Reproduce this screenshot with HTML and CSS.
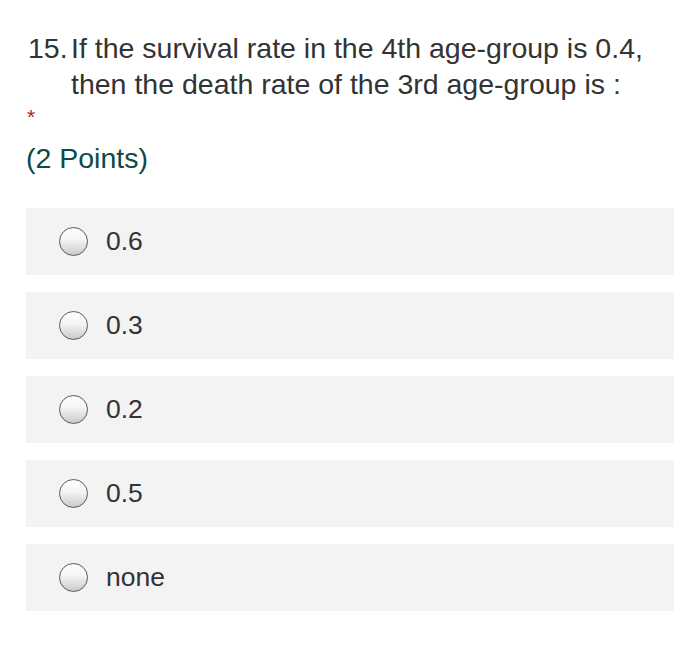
FILE: index.html
```html
<!DOCTYPE html>
<html>
<head>
<meta charset="utf-8">
<link rel="stylesheet" href="styles.css">
</head>
<body>
<div class="question">
  <div class="title">
    <span class="num">15.</span>
    <span class="text">If the survival rate in the 4th age-group is 0.4, then the death rate of the 3rd age-group is :</span>
  </div>
  <div class="required">*</div>
  <div class="points">(2 Points)</div>
  <div class="options">
    <div class="option"><span class="radio"></span><span class="label">0.6</span></div>
    <div class="option"><span class="radio"></span><span class="label">0.3</span></div>
    <div class="option"><span class="radio"></span><span class="label">0.2</span></div>
    <div class="option"><span class="radio"></span><span class="label">0.5</span></div>
    <div class="option"><span class="radio"></span><span class="label">none</span></div>
  </div>
</div>
</body>
</html>
```
FILE: styles.css
```css
html, body {
  margin: 0;
  padding: 0;
  background: #ffffff;
}
body {
  font-family: "Liberation Sans", Arial, sans-serif;
  color: #333333;
}
.question {
  padding: 30px 26px 0 26px;
}
.title {
  display: flex;
  font-size: 28.5px;
  line-height: 36px;
  padding-left: 2px;
  width: 640px;
}
.num {
  flex: 0 0 43px;
}
.text {
  flex: 1;
}
.required {
  color: #a4262c;
  font-size: 21px;
  line-height: 22px;
  margin-top: 4px;
  padding-left: 1px;
}
.points {
  color: #0d4a47;
  font-size: 28.5px;
  line-height: 36px;
  margin-top: 12px;
}
.options {
  display: flex;
  flex-direction: column;
  gap: 17px;
  margin-top: 32px;
}
.option {
  display: flex;
  align-items: center;
  height: 67px;
  background: #f3f3f3;
  padding-left: 33px;
  gap: 18px;
}
.radio {
  width: 27px;
  height: 27px;
  border-radius: 50%;
  border: 1.5px solid #5a5a5a;
  background: linear-gradient(to bottom, #ffffff 0%, #f4f4f4 45%, #c9c9c9 100%);
  box-sizing: content-box;
}
.label {
  font-size: 26.5px;
  color: #333333;
}
```
